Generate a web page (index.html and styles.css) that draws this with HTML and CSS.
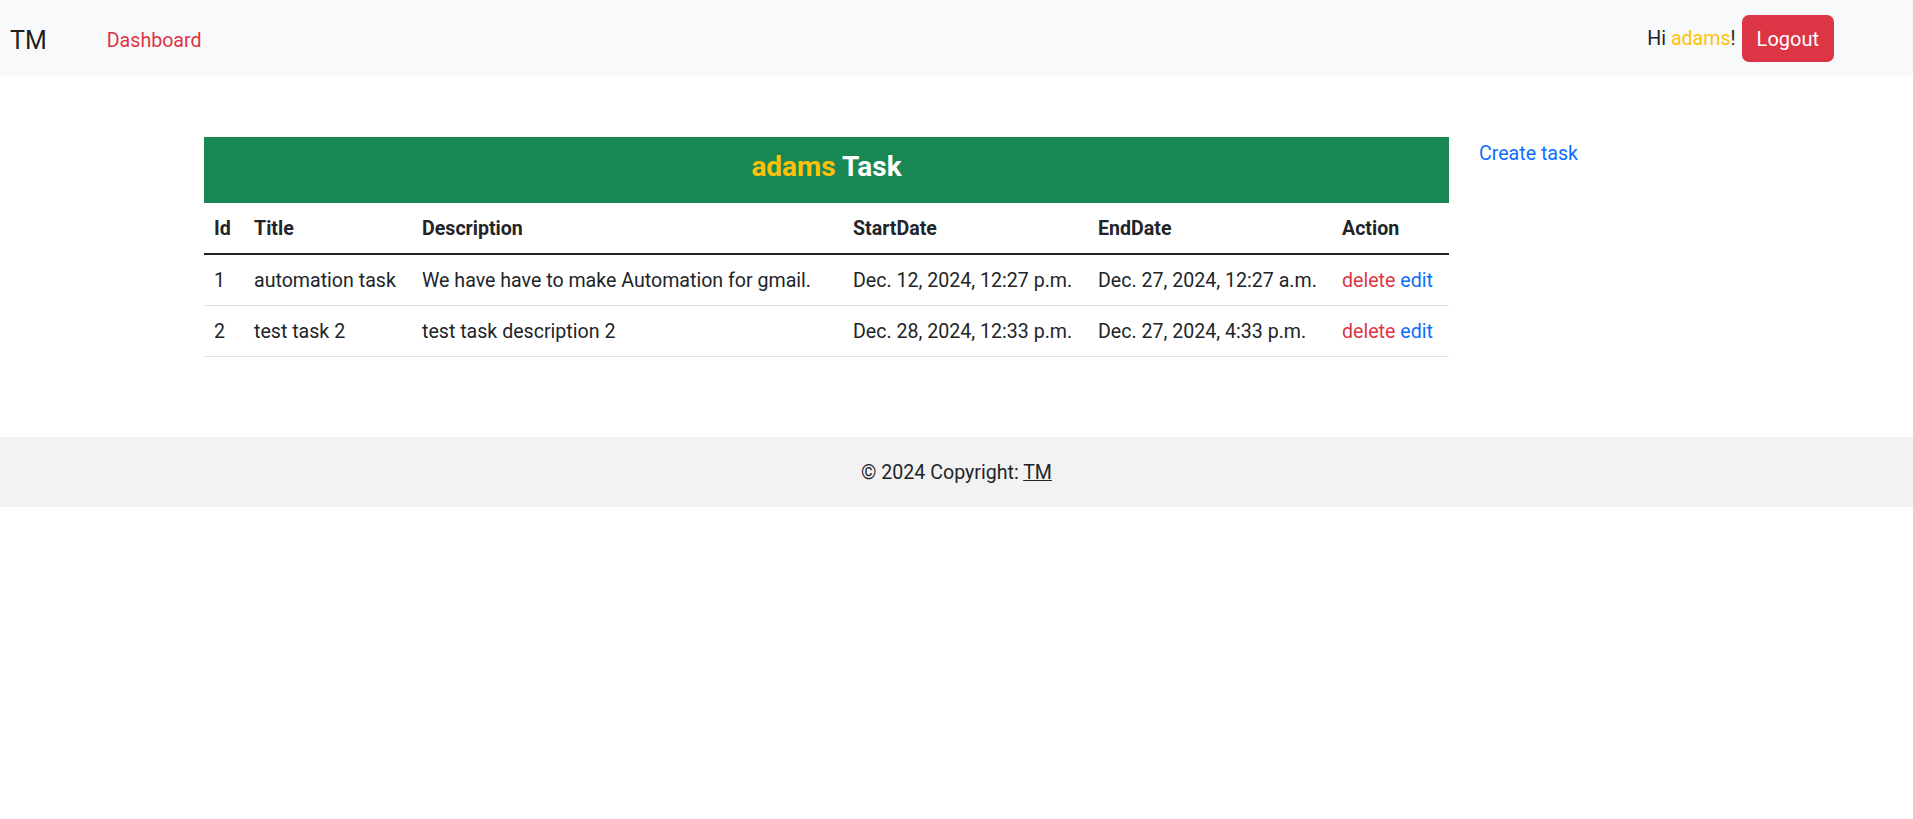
FILE: index.html
```html
<!DOCTYPE html>
<html lang="en">
<head>
<meta charset="utf-8">
<title>TM</title>
<link rel="stylesheet" href="styles.css">
</head>
<body>
<nav class="navbar">
  <a class="brand" href="#">TM</a>
  <a class="nav-link" href="#">Dashboard</a>
  <div class="spacer"></div>
  <span class="greet">Hi <span class="user">adams</span>!</span>
  <button class="btn-logout">Logout</button>
</nav>
<main class="main">
  <section class="task-col">
    <div class="task-head"><h4 class="task-title"><span class="user">adams</span> Task</h4></div>
    <table class="task-table">
      <colgroup>
        <col class="c-id"><col class="c-title"><col class="c-desc"><col class="c-start"><col class="c-end"><col class="c-action">
      </colgroup>
      <thead>
        <tr><th>Id</th><th>Title</th><th>Description</th><th>StartDate</th><th>EndDate</th><th>Action</th></tr>
      </thead>
      <tbody>
        <tr><td>1</td><td>automation task</td><td>We have have to make Automation for gmail.</td><td>Dec. 12, 2024, 12:27 p.m.</td><td>Dec. 27, 2024, 12:27 a.m.</td><td><a class="del" href="#">delete</a> <a class="edit" href="#">edit</a></td></tr>
        <tr><td>2</td><td>test task 2</td><td>test task description 2</td><td>Dec. 28, 2024, 12:33 p.m.</td><td>Dec. 27, 2024, 4:33 p.m.</td><td><a class="del" href="#">delete</a> <a class="edit" href="#">edit</a></td></tr>
      </tbody>
    </table>
  </section>
  <aside class="side-col">
    <a class="create" href="#">Create task</a>
  </aside>
</main>
<footer class="footer">© 2024 Copyright: <a class="foot-link" href="#">TM</a></footer>
</body>
</html>
```

FILE: styles.css
```css
* { box-sizing: border-box; }
html, body { margin: 0; padding: 0; }
body {
  font-family: "Segoe UI", Roboto, "Noto Sans", sans-serif;
  font-size: 19.6px;
  line-height: 30px;
  color: #212529;
  background: #fff;
}
a { text-decoration: none; }

.navbar {
  display: flex;
  align-items: center;
  height: 77px;
  padding: 0 79px 0 10px;
  background: #f8f9fa;
}
.brand {
  font-size: 25px;
  line-height: 37px;
  padding-top: 4px;
  color: rgba(0,0,0,.9);
}
.nav-link {
  margin-left: 60px;
  padding-top: 4px;
  color: #dc3545;
}
.spacer { flex: 1; }
.greet { color: #212529; }
.user { color: #ffc107; }
.btn-logout {
  margin-left: 6px;
  height: 47px;
  padding: 1px 15px 0;
  border: 0;
  border-radius: 7px;
  background: #dc3545;
  color: #fff;
  font: inherit;
  font-size: 20px;
}

.main {
  display: flex;
  padding-left: 204px;
  margin: 60px 0;
}
.task-col {
  width: 1245px;
  margin-bottom: 20px;
}
.side-col { padding-left: 30px; padding-top: 2px; }
.create { color: #0d6efd; }

.task-head {
  background: #198754;
  height: 66px;
  padding-top: 12px;
  text-align: center;
}
.task-title {
  margin: 0;
  font-size: 28px;
  line-height: 36px;
  font-weight: 700;
  color: #fff;
}

.task-table {
  width: 1245px;
  table-layout: fixed;
  border-collapse: collapse;
}
.c-id { width: 40px; }
.c-title { width: 168px; }
.c-desc { width: 431px; }
.c-start { width: 245px; }
.c-end { width: 244px; }
.c-action { width: 117px; }
.task-table th, .task-table td {
  padding: 11px 10px 9px;
  text-align: left;
  white-space: nowrap;
  vertical-align: top;
}
.task-table th {
  font-weight: 700;
  border-bottom: 2px solid #212529;
}
.task-table td { border-bottom: 1px solid #dee2e6; }
.del { color: #dc3545; }
.edit { color: #0d6efd; }

.footer {
  height: 70px;
  padding: 21px 0 19px;
  background: #f2f2f2;
  text-align: center;
}
.foot-link { color: #212529; text-decoration: underline; }
```
